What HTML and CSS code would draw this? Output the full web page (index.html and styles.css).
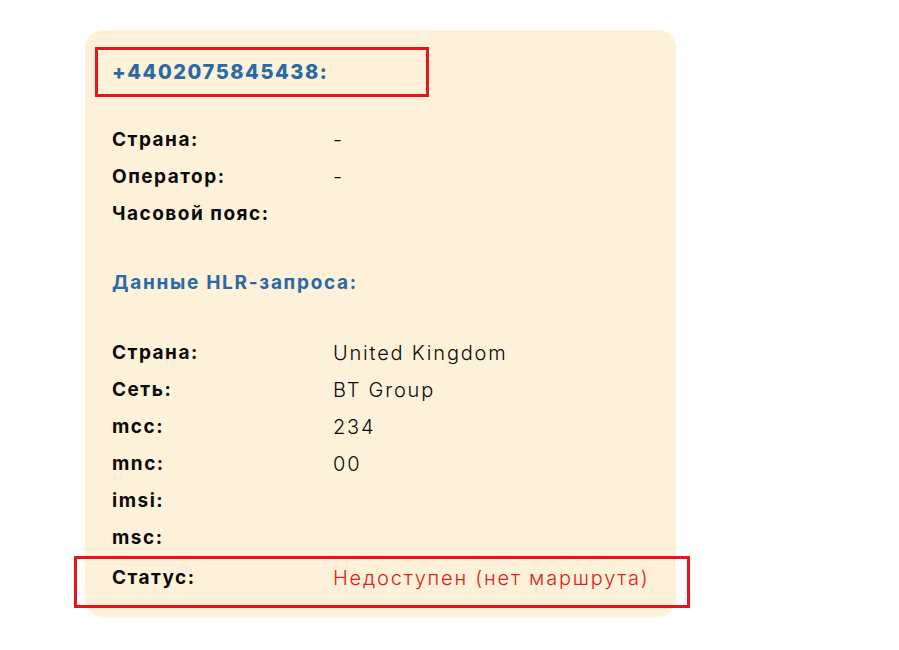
FILE: index.html
```html
<!DOCTYPE html>
<html lang="ru">
<head>
<meta charset="utf-8">
<link rel="stylesheet" href="styles.css">
</head>
<body>
<div class="card">
  <div class="phone-box"><h2 class="phone">+4402075845438:</h2></div>
  <dl class="list first">
    <div class="row"><dt>Страна:</dt><dd>-</dd></div>
    <div class="row"><dt>Оператор:</dt><dd>-</dd></div>
    <div class="row"><dt>Часовой пояс:</dt><dd></dd></div>
  </dl>
  <h3 class="section">Данные HLR-запроса:</h3>
  <dl class="list second">
    <div class="row"><dt>Страна:</dt><dd>United Kingdom</dd></div>
    <div class="row"><dt>Сеть:</dt><dd>BT Group</dd></div>
    <div class="row"><dt>mcc:</dt><dd>234</dd></div>
    <div class="row"><dt>mnc:</dt><dd>00</dd></div>
    <div class="row"><dt>imsi:</dt><dd></dd></div>
    <div class="row"><dt>msc:</dt><dd></dd></div>
    <div class="row status"><dt>Статус:</dt><dd class="bad">Недоступен (нет маршрута)</dd></div>
  </dl>
</div>
</body>
</html>
```
FILE: styles.css
```css
* { box-sizing: border-box; }
html, body { margin: 0; padding: 0; background: #fff; }
body { font-family: Inter, "Noto Sans", sans-serif; color: #0a0a0a; }
.card {
  margin: 30px 0 0 85px;
  width: 591px;
  height: 587px;
  background: #fdf2d9;
  border-radius: 18px;
  padding: 17px 0 0 10px;
}
.phone-box {
  width: 334px;
  height: 50px;
  border: 3px solid #e8141c;
  display: flex;
  align-items: center;
  padding-left: 14px;
}
.phone {
  margin: 0;
  font-size: 20px;
  font-weight: 800;
  color: #2a68a6;
  letter-spacing: 1.55px;
}
.list { margin: 0; padding-left: 17px; }
.list.first { margin-top: 24px; }
.row { display: flex; height: 37px; align-items: center; font-size: 19px; }
dt { width: 221px; font-weight: 700; letter-spacing: 1.5px; flex: none; }
dd { margin: 0; font-weight: 300; font-size: 20px; letter-spacing: 1.8px; }
.section {
  margin: 32px 0 0 17px;
  height: 37px;
  display: flex;
  align-items: center;
  font-size: 19px;
  font-weight: 700;
  letter-spacing: 1.7px;
  color: #2a68a6;
}
.list.second { margin-top: 33px; }
.row.status { position: relative; margin-top: 3px; }
.row.status::after {
  content: "";
  position: absolute;
  left: -38px;
  right: -14px;
  top: -3px;
  height: 46px;
  border: 3px solid #e8141c;
}
.bad { color: #e0201b; }
```
